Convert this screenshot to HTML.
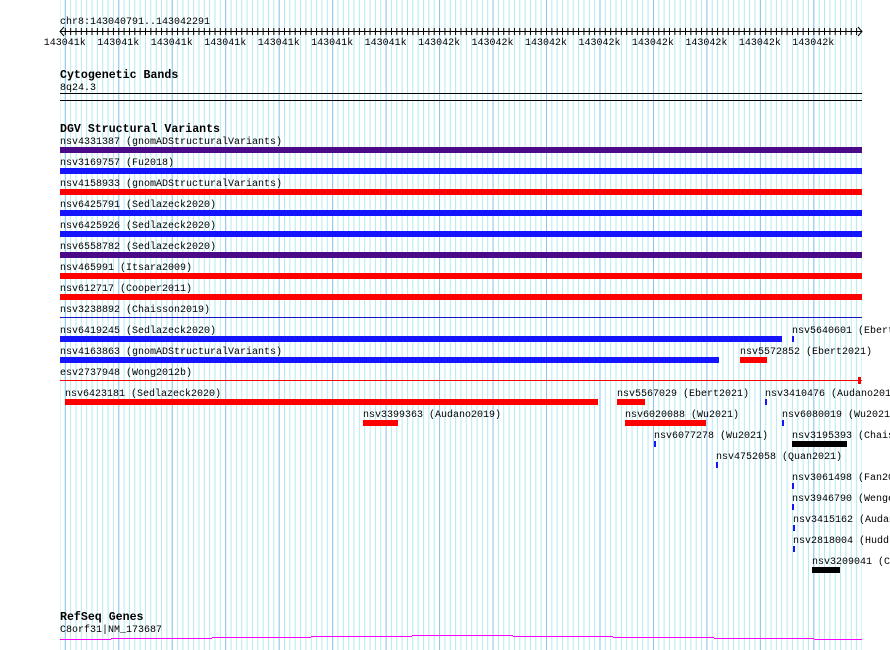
<!DOCTYPE html>
<html><head><meta charset="utf-8"><style>
html,body{margin:0;padding:0;background:#fff;}
svg{display:block;}
text{font-family:"Liberation Mono",monospace;font-size:10px;fill:#000;}
.b{font-weight:bold;font-size:11.6px;}
</style></head><body>
<svg width="890" height="650" viewBox="0 0 890 650" xmlns="http://www.w3.org/2000/svg">
<defs>
<pattern id="mn" patternUnits="userSpaceOnUse" x="64.8" y="0" width="5.3467" height="650"><rect x="0" y="0" width="1" height="650" fill="#b4eaf0"/></pattern>
<pattern id="mj" patternUnits="userSpaceOnUse" x="64.8" y="0" width="53.467" height="650"><rect x="0" y="0" width="1" height="650" fill="#8ec4ec"/></pattern>
<pattern id="tk" patternUnits="userSpaceOnUse" x="64.8" y="0" width="5.3467" height="650"><rect x="0" y="0" width="1" height="650" fill="#000"/></pattern>
</defs>
<rect x="60" y="0" width="802" height="650" fill="url(#mn)"/>
<rect x="60" y="0" width="802" height="650" fill="url(#mj)"/>
<text x="60" y="24">chr8:143040791..143042291</text>
<rect x="60" y="31" width="802" height="1" fill="#000"/>
<rect x="62" y="28" width="798" height="7" fill="url(#tk)"/>
<path d="M64 27 L60 31.5 L64 36 M858 27 L862 31.5 L858 36" stroke="#000" fill="none"/>
<g text-anchor="middle">
<text x="64.8" y="45">143041k</text><text x="118.3" y="45">143041k</text><text x="171.7" y="45">143041k</text><text x="225.2" y="45">143041k</text><text x="278.7" y="45">143041k</text><text x="332.1" y="45">143041k</text><text x="385.6" y="45">143041k</text><text x="439.1" y="45">143042k</text><text x="492.5" y="45">143042k</text><text x="546" y="45">143042k</text><text x="599.5" y="45">143042k</text><text x="652.9" y="45">143042k</text><text x="706.4" y="45">143042k</text><text x="759.9" y="45">143042k</text><text x="813.3" y="45">143042k</text>
</g>
<text class="b" x="60" y="78">Cytogenetic Bands</text>
<text x="60" y="90">8q24.3</text>
<rect x="60" y="93" width="802" height="1" fill="#000"/>
<rect x="60" y="100" width="802" height="1" fill="#000"/>
<text class="b" x="60" y="132">DGV Structural Variants</text>

<text x="60" y="144">nsv4331387 (gnomADStructuralVariants)</text><rect x="60" y="147" width="802" height="6" fill="#4b0a88"/>
<text x="60" y="165">nsv3169757 (Fu2018)</text><rect x="60" y="168" width="802" height="6" fill="#1414ff"/>
<text x="60" y="186">nsv4158933 (gnomADStructuralVariants)</text><rect x="60" y="189" width="802" height="6" fill="#ff0000"/>
<text x="60" y="207">nsv6425791 (Sedlazeck2020)</text><rect x="60" y="210" width="802" height="6" fill="#1414ff"/>
<text x="60" y="228">nsv6425926 (Sedlazeck2020)</text><rect x="60" y="231" width="802" height="6" fill="#1414ff"/>
<text x="60" y="249">nsv6558782 (Sedlazeck2020)</text><rect x="60" y="252" width="802" height="6" fill="#4b0a88"/>
<text x="60" y="270">nsv465991 (Itsara2009)</text><rect x="60" y="273" width="802" height="6" fill="#ff0000"/>
<text x="60" y="291">nsv612717 (Cooper2011)</text><rect x="60" y="294" width="802" height="6" fill="#ff0000"/>
<text x="60" y="312">nsv3238892 (Chaisson2019)</text><rect x="60" y="317" width="802" height="1" fill="#1414c8"/>
<text x="60" y="333">nsv6419245 (Sedlazeck2020)</text><rect x="60" y="336" width="722" height="6" fill="#1414ff"/>
<text x="792" y="333">nsv5640601 (Ebert2021)</text><rect x="792" y="336" width="2" height="6" fill="#1414ff"/>
<text x="60" y="354">nsv4163863 (gnomADStructuralVariants)</text><rect x="60" y="357" width="659" height="6" fill="#1414ff"/>
<text x="740" y="354">nsv5572852 (Ebert2021)</text><rect x="740" y="357" width="27" height="6" fill="#ff0000"/>
<text x="60" y="375">esv2737948 (Wong2012b)</text><rect x="60" y="380" width="802" height="1" fill="#ff0000"/><rect x="858" y="377" width="3" height="7" fill="#ff0000"/>
<text x="65" y="396">nsv6423181 (Sedlazeck2020)</text><rect x="65" y="399" width="533" height="6" fill="#ff0000"/>
<text x="617" y="396">nsv5567029 (Ebert2021)</text><rect x="617" y="399" width="28" height="6" fill="#ff0000"/>
<text x="765" y="396">nsv3410476 (Audano2019)</text><rect x="765" y="399" width="2" height="6" fill="#1414ff"/>
<text x="363" y="417">nsv3399363 (Audano2019)</text><rect x="363" y="420" width="35" height="6" fill="#ff0000"/>
<text x="625" y="417">nsv6020088 (Wu2021)</text><rect x="625" y="420" width="81" height="6" fill="#ff0000"/>
<text x="782" y="417">nsv6080019 (Wu2021)</text><rect x="782" y="420" width="2" height="6" fill="#1414ff"/>
<text x="654" y="438">nsv6077278 (Wu2021)</text><rect x="654" y="441" width="2" height="6" fill="#1414ff"/>
<text x="792" y="438">nsv3195393 (Chaisson2019)</text><rect x="792" y="441" width="55" height="6" fill="#000"/>
<text x="716" y="459">nsv4752058 (Quan2021)</text><rect x="716" y="462" width="2" height="6" fill="#1414ff"/>
<text x="792" y="480">nsv3061498 (Fan2021)</text><rect x="792" y="483" width="2" height="6" fill="#1414ff"/>
<text x="792" y="501">nsv3946790 (Wenger2019)</text><rect x="792" y="504" width="2" height="6" fill="#1414ff"/>
<text x="793" y="522">nsv3415162 (Audano2019)</text><rect x="793" y="525" width="2" height="6" fill="#1414ff"/>
<text x="793" y="543">nsv2818004 (Huddleston2017)</text><rect x="793" y="546" width="2" height="6" fill="#1414ff"/>
<text x="812" y="564">nsv3209041 (Chaisson2019)</text><rect x="812" y="567" width="28" height="6" fill="#000"/>

<text class="b" x="60" y="620">RefSeq Genes</text>
<text x="60" y="632">C8orf31|NM_173687</text>
<path d="M60 639.5 H111 M111 638.5 H212 M212 637.5 H311 M311 636.5 H412 M412 635.5 H513 M513 636.5 H613 M613 637.5 H714 M714 638.5 H814 M814 639.5 H862" stroke="#ff00ff" stroke-width="1" fill="none"/>
</svg>
</body></html>
